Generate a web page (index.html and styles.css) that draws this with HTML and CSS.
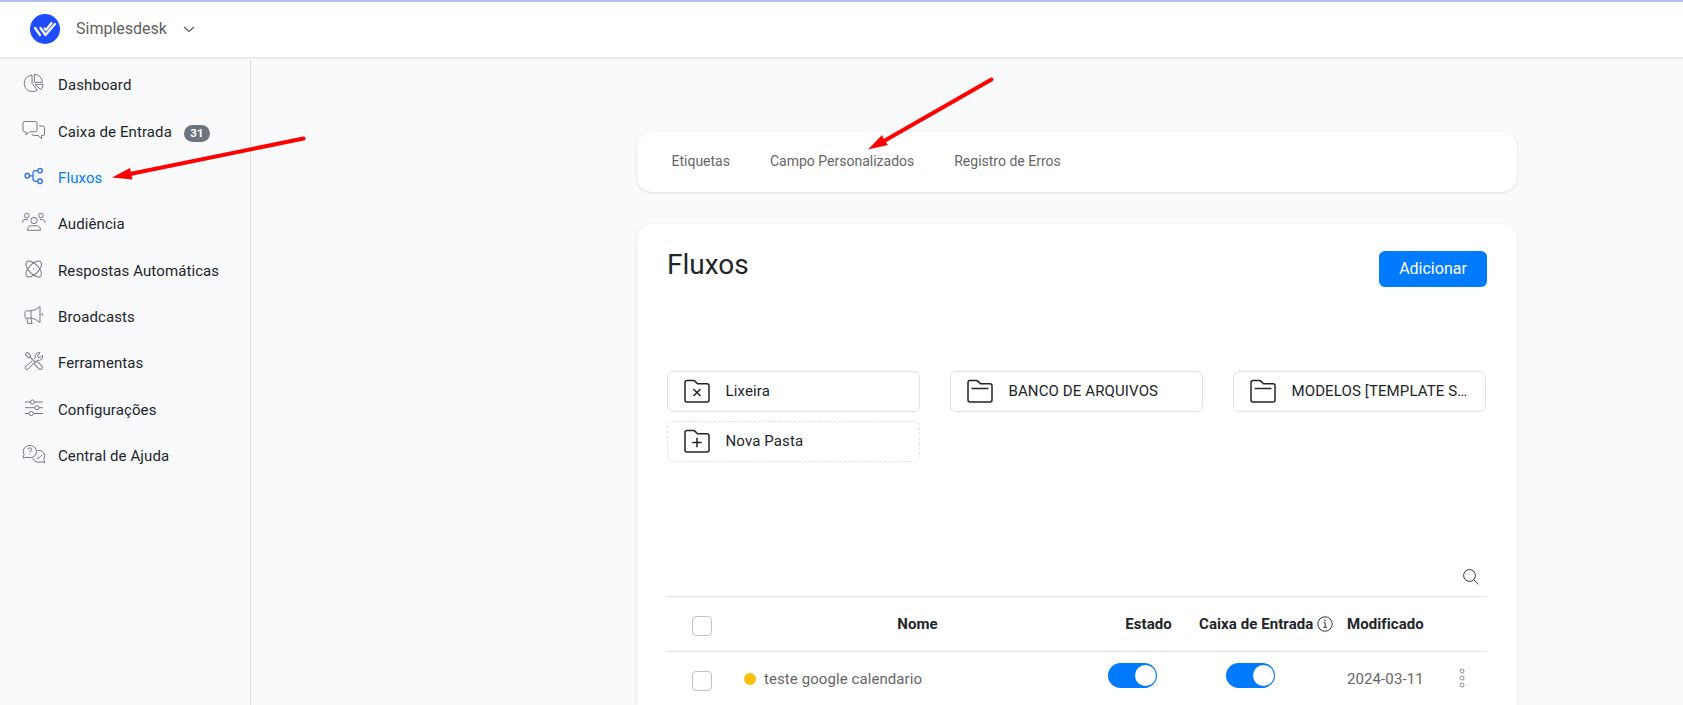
FILE: index.html
```html
<!DOCTYPE html>
<html lang="pt-BR">
<head>
<meta charset="utf-8">
<title>Fluxos</title>
<link rel="stylesheet" href="styles.css">
</head>
<body>
<header class="topbar">
  <svg class="logo" width="30" height="30" viewBox="0 0 30 30"><circle cx="15" cy="15" r="15" fill="#1d4dff"/><g fill="none" stroke="#fff" stroke-width="2.2" stroke-linecap="round" stroke-linejoin="round"><path d="M5 14l5 7M10.500 14l5 7L25 10"/><path d="M14.700 14.500l1.300 1.700L21.500 9"/></g></svg>
  <span class="brand">Simplesdesk</span>
  <svg class="chev" width="12" height="7" viewBox="0 0 12 7"><path d="M1 1l5 4.500L11 1" fill="none" stroke="#555" stroke-width="1.100"/></svg>
</header>
<div class="layout">
  <nav class="sidebar">
    <a class="item"><svg class="ico" viewBox="0 0 24 20"><path d="M10 2.200A8.200 8.200 0 1 0 15.300 17L10 10.500z M12.300 1.300v8h8a8 8 0 0 0-8-8z M13 11.300h8a7 7 0 0 1-2.400 5.200z"/></svg>Dashboard</a>
    <a class="item"><svg class="ico" viewBox="0 0 24 20"><path d="M2.500 1.500h11a1.500 1.500 0 0 1 1.500 1.500v7.300a1.500 1.500 0 0 1-1.500 1.500H7.700L4 14.800v-3H2.500A1.500 1.500 0 0 1 1 10.300V3a1.500 1.500 0 0 1 1.500-1.500z M17 6h4a1.500 1.500 0 0 1 1.500 1.500V14a1.500 1.500 0 0 1-1.500 1.500h-1.500v3L16 15.500h-4.500A1.500 1.500 0 0 1 10 14"/></svg>Caixa de Entrada<span class="badge">31</span></a>
    <a class="item active"><svg class="ico" viewBox="0 0 24 20"><circle cx="5.300" cy="9.800" r="2.300"/><circle cx="18" cy="4.600" r="2.300"/><circle cx="18" cy="15.300" r="2.300"/><path d="M7.600 9.800H11M15.700 4.600h-2.200A2.500 2.500 0 0 0 11 7.100v5.700a2.500 2.500 0 0 0 2.500 2.500h2.200"/></svg>Fluxos</a>
    <a class="item"><svg class="ico" viewBox="0 0 24 20"><circle cx="4.800" cy="3.500" r="2.300"/><circle cx="19" cy="3.500" r="2.300"/><circle cx="12" cy="8.500" r="3.200"/><path d="M.8 11V9.500Q1 7.700 3 7.700h3M23 11V9.500Q22.800 7.700 20.800 7.700h-3M5.500 18.300q0-4.500 4-4.500h5q4 0 4 4.500z"/></svg>Audiência</a>
    <a class="item"><svg class="ico" viewBox="0 0 24 20"><ellipse cx="11.700" cy="10" rx="10" ry="4.900" transform="rotate(45 11.700 10)"/><ellipse cx="11.700" cy="10" rx="10" ry="4.900" transform="rotate(-45 11.700 10)"/><circle cx="11.700" cy="10" r=".3"/></svg>Respostas Automáticas</a>
    <a class="item"><svg class="ico" viewBox="0 0 24 20"><path d="M9 5.800H4.500A1.500 1.500 0 0 0 3 7.300v4.400a1.500 1.500 0 0 0 1.500 1.500H9zM9 5.800q5-.3 9-4.300v16Q14 13.500 9 13.200M4.800 13.400l1 5h4.200l-1.200-5M20.200 8v3"/></svg>Broadcasts</a>
    <a class="item"><svg class="ico" viewBox="0 0 24 20"><g transform="rotate(-45 12 10)"><rect x="10.300" y="-1" width="3.400" height="5.200" rx="1.300"/><path d="M12 4.200v7.500"/><rect x="10" y="11.700" width="4" height="9.300" rx="1.800"/></g><path d="M12 8.300l1.200-1.300q-.9-3.200 1.600-4.800 1.600-1 3.200-.4l-2.300 2.500.4 1.900 1.900.5 2.400-2.400q.7 2.200-.8 3.900-1.800 1.700-4.400 1l-1.100 1.200M10.300 9.800l-6.600 5.500a1.900 1.900 0 0 0 2.700 2.700l5.500-6.200"/></svg>Ferramentas</a>
    <a class="item"><svg class="ico" viewBox="0 0 24 20"><path d="M3 4h5.300M12.700 4H21M3 9.700h9.800M17.200 9.700H21M3 15.500h4M11.400 15.500H21"/><circle cx="10.500" cy="4" r="2.100"/><circle cx="15" cy="9.700" r="2.100"/><circle cx="9.200" cy="15.500" r="2.100"/></svg>Configurações</a>
    <a class="item"><svg class="ico" viewBox="0 0 24 20"><path d="M1 14l1-3.400A6.700 6.200 0 1 1 5 13.200zM15.500 6.500a5.800 5.800 0 0 1 6.300 8.700l.9 3.300-3.700-.6a6.300 6.300 0 0 1-8.200-3.500M6 5.500q.3-1.800 2-1.700 2 .2 1.800 1.800Q9.600 6.800 8 7.200v1.300M8 9.800v.8M14.500 13l1.700 1.700 3.300-3.500"/></svg>Central de Ajuda</a>
  </nav>
  <main class="main">
    <section class="card tabs"><a>Etiquetas</a><a>Campo Personalizados</a><a>Registro de Erros</a></section>
    <section class="card panel">
      <div class="head"><h1>Fluxos</h1><button class="add">Adicionar</button></div>
      <div class="folders">
        <div class="folder"><svg class="fico" viewBox="0 0 28 24"><path d="M4 1.500h6.500q.8 0 1.400.6l2.600 2.600H24q2 0 2 2V21q0 2-2 2H4q-2 0-2-2V3.500q0-2 2-2z"/><path d="M10.500 10l7 7M17.500 10l-7 7"/></svg><span>Lixeira</span></div>
        <div class="folder"><svg class="fico" viewBox="0 0 28 24"><path d="M4 1.500h6.500q.8 0 1.400.6l2.600 2.600H24q2 0 2 2V21q0 2-2 2H4q-2 0-2-2V3.500q0-2 2-2z"/><path d="M5.500 9.500h17"/></svg><span>BANCO DE ARQUIVOS</span></div>
        <div class="folder"><svg class="fico" viewBox="0 0 28 24"><path d="M4 1.500h6.500q.8 0 1.400.6l2.600 2.600H24q2 0 2 2V21q0 2-2 2H4q-2 0-2-2V3.500q0-2 2-2z"/><path d="M5.500 9.500h17"/></svg><span>MODELOS [TEMPLATE S…</span></div>
        <div class="folder dashed"><svg class="fico" viewBox="0 0 28 24"><path d="M4 1.500h6.500q.8 0 1.400.6l2.600 2.600H24q2 0 2 2V21q0 2-2 2H4q-2 0-2-2V3.500q0-2 2-2z"/><path d="M9.300 13.500h9.400M14 8.800v9.400"/></svg><span>Nova Pasta</span></div>
      </div>
      <div class="search"><svg width="16" height="16" viewBox="0 0 16 16"><circle cx="6.500" cy="6.500" r="5.900"/><path d="M10.700 10.700l4.700 4.500"/></svg></div>
      <div class="row thead">
        <div class="check"><i class="box"></i></div><div>Nome</div><div>Estado</div>
        <div class="inbox">Caixa de Entrada<svg width="16" height="16" viewBox="0 0 16 16"><circle cx="8" cy="8" r="7.200" fill="none" stroke="#333"/><path d="M6.500 6.700h1.700v4.500M6.300 11.300h3.600" fill="none" stroke="#333"/><circle cx="8" cy="4.400" r=".8" fill="#333"/></svg></div>
        <div class="mod">Modificado</div><div></div>
      </div>
      <div class="row tbody">
        <div class="check"><i class="box"></i></div>
        <div class="name"><i class="dot"></i><span>teste google calendario</span></div>
        <div class="tg"><i class="toggle"></i></div>
        <div class="tg wide"><i class="toggle"></i></div>
        <div class="mod">2024-03-11</div>
        <div class="menu"><svg width="6" height="20" viewBox="0 0 6 20"><circle cx="3" cy="3" r="1.900"/><circle cx="3" cy="10" r="1.900"/><circle cx="3" cy="17" r="1.900"/></svg></div>
      </div>
    </section>
  </main>
</div>
<svg class="arrows" width="1683" height="705" viewBox="0 0 1683 705">
  <g stroke="#f00" stroke-width="4" stroke-linecap="round"><path d="M303.500 138.500L130 174"/><path d="M991.500 79.500L884 141"/></g>
  <path d="M112 177.500L130 168l2.500 11.500zM868 149.500L882 135l2 4.500 4 5.500z" fill="#f00"/>
</svg>
</body>
</html>
```
FILE: styles.css
```css
* { box-sizing: border-box; }
body { margin: 0; height: 705px; overflow: hidden; background: #f9fafc; font-family: Roboto, sans-serif; color: #212529; position: relative; }
.topbar { height: 59px; background: #fff; border-top: 2px solid #b3c1ea; border-bottom: 2px solid #ebebeb; display: flex; align-items: center; padding: 0 0 0 30px; }
.logo { margin-top: -1px; }
.brand { font-size: 16px; color: #5f5f5f; margin: -2px 16px 0 16px; }
.layout { display: flex; height: 646px; }
.sidebar { width: 251px; flex: none; margin-top: 1px; padding-top: 2px; border-right: 1px solid #dcdee0; display: flex; flex-direction: column; }
.item { height: 46.350px; display: flex; align-items: center; padding-left: 21.500px; font-size: 15px; letter-spacing: .1px; flex: none; }
.ico { width: 24px; height: 20px; margin: -4px 12.500px 0 0; fill: none; stroke: #77797c; stroke-width: 1; stroke-linejoin: round; overflow: visible; }
.active { color: #007bff; }
.active .ico { stroke: #2b6bff; stroke-width: 1.300; }
.badge { background: #6c757d; color: #fff; font-weight: 700; font-size: 11.500px; border-radius: 9px; width: 26px; height: 17px; display: flex; align-items: center; justify-content: center; margin: 3px 0 0 12px; }
.main { flex: 1; padding: 73px 0 0 386px; }
.card { width: 880px; background: #fff; border-radius: 15px; box-shadow: 0 1px 3px rgba(0,0,0,.12); }
.tabs { height: 60px; padding: 0 34.500px; display: flex; gap: 40px; align-items: center; font-size: 14px; color: #666; }
.tabs a { margin-top: -2px; }
.panel { height: 481px; margin-top: 32px; padding: 27px 30px 0; border-radius: 15px 15px 0 0; }
.head { display: flex; justify-content: space-between; height: 120px; align-items: flex-start; }
h1 { margin: -3px 0 0; font-size: 28px; font-weight: 400; line-height: 34px; }
.add { width: 108px; height: 36px; border: 0; border-radius: 6px; background: #007bff; color: #fff; font: 16px Roboto, sans-serif; padding: 0 0 2px; }
.folders { display: grid; grid-template-columns: repeat(3, 253px); column-gap: 30px; row-gap: 9px; }
.folder { height: 41px; border: 1px solid #dee2e6; border-radius: 6px; display: flex; align-items: center; padding: 0 0 0 15px; font-size: 15px; letter-spacing: .12px; }
.folder span { margin-top: -2px; white-space: nowrap; }
.dashed { border-style: dashed; }
.fico { width: 28px; height: 24px; flex: none; margin: -1px 14.500px 0 0; fill: none; stroke: #212529; stroke-width: 1.500; }
.search { height: 134px; display: flex; justify-content: flex-end; align-items: flex-end; padding: 0 8px 11px 0; }
.search svg { fill: none; stroke: #333; }
.row { display: grid; grid-template-columns: 70px 361px 101px 148px 90px 50px; height: 55px; border-top: 1px solid #dee2e6; font-size: 15px; }
.row > div { display: flex; align-items: center; justify-content: center; white-space: nowrap; }
.thead { font-weight: 700; font-size: 15px; letter-spacing: .08px; }
.row .check { justify-content: flex-start; padding-left: 25px; }
.thead .check { padding-top: 4px; }
.box { width: 20px; height: 20px; border: 1px solid #bfc3c7; border-radius: 4px; }
.row .inbox { justify-content: flex-start; }
.inbox svg { margin-left: 4px; margin-top: -1px; }
.row .mod { justify-content: flex-start; }
.tbody { height: 53px; color: #666; }
.tbody .check { padding-top: 5px; }
.row .name { justify-content: flex-start; padding: 1px 0 0 7px; letter-spacing: .08px; }
.name span { padding-top: 1px; }
.dot { width: 12px; height: 12px; border-radius: 50%; background: #ffc107; margin-right: 8px; }
.tbody .mod { letter-spacing: .1px; padding-top: 2px; }
.row .tg { justify-content: flex-start; align-items: flex-start; padding: 11px 0 0 10px; }
.row .wide { padding-left: 27px; }
.toggle { width: 49px; height: 25px; border-radius: 13px; background: #007bff; display: flex; justify-content: flex-end; padding: 2px 1px; }
.toggle::after { content: ""; width: 21px; height: 21px; border-radius: 50%; background: #fff; }
.menu svg { fill: none; stroke: #aaa; stroke-width: 1.300; margin-left: -1px; }
.arrows { position: absolute; left: 0; top: 0; pointer-events: none; }
```
